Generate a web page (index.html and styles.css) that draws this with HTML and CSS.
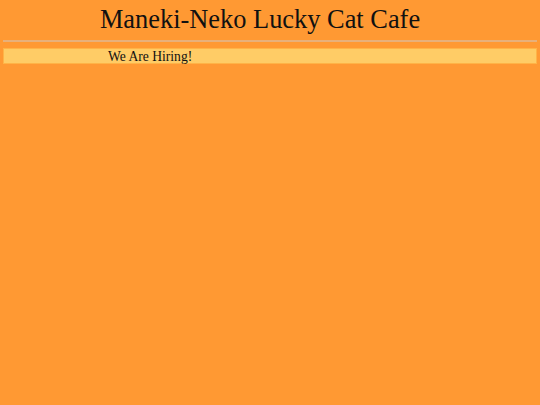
FILE: index.html
```html
<!DOCTYPE html>
<html>
<head>
<meta charset="utf-8">
<link rel="stylesheet" href="styles.css">
</head>
<body>
<header class="site-header">
  <h1 class="site-title">Maneki-Neko Lucky Cat Cafe</h1>
</header>
<hr class="divider">
<div class="banner"><span class="banner-text">We Are Hiring!</span></div>
</body>
</html>
```
FILE: styles.css
```css
html, body {
  margin: 0;
  padding: 0;
}
body {
  background: #ff9933;
  font-family: "Liberation Serif", "Times New Roman", serif;
  color: #111;
  padding: 0 3px;
}
.site-header {
  padding-right: 20px;
}
.site-title {
  margin: 0;
  padding-top: 4px;
  font-size: 26.4px;
  font-weight: normal;
  text-align: center;
  line-height: 30px;
}
.divider {
  margin: 6px 0 0 0;
  border: 0;
  border-top: 2px solid #e8b07a;
  height: 0;
}
.banner {
  margin-top: 6px;
  background: #ffcc66;
  border: 1px solid #ffb347;
  height: 14px;
  line-height: 15px;
  font-size: 13.6px;
  padding-left: 104px;
}
```
